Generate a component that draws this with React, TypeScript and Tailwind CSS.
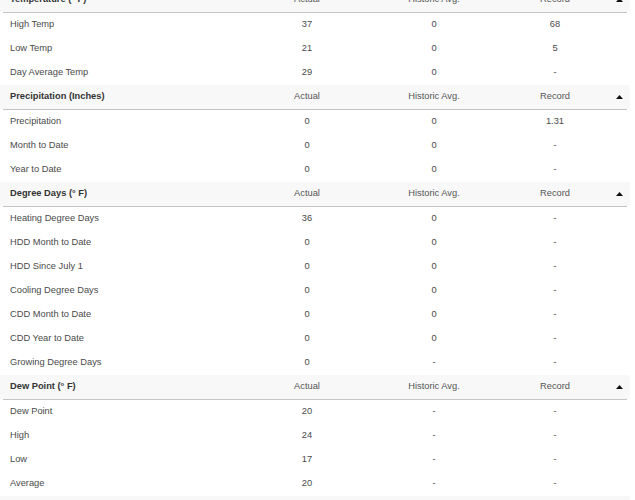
type Row = [string, string, string, string];

const sections: { title: string; rows: Row[] }[] = [
  {
    title: 'Temperature (° F)',
    rows: [
      ['High Temp', '37', '0', '68'],
      ['Low Temp', '21', '0', '5'],
      ['Day Average Temp', '29', '0', '-'],
    ],
  },
  {
    title: 'Precipitation (Inches)',
    rows: [
      ['Precipitation', '0', '0', '1.31'],
      ['Month to Date', '0', '0', '-'],
      ['Year to Date', '0', '0', '-'],
    ],
  },
  {
    title: 'Degree Days (° F)',
    rows: [
      ['Heating Degree Days', '36', '0', '-'],
      ['HDD Month to Date', '0', '0', '-'],
      ['HDD Since July 1', '0', '0', '-'],
      ['Cooling Degree Days', '0', '0', '-'],
      ['CDD Month to Date', '0', '0', '-'],
      ['CDD Year to Date', '0', '0', '-'],
      ['Growing Degree Days', '0', '-', '-'],
    ],
  },
  {
    title: 'Dew Point (° F)',
    rows: [
      ['Dew Point', '20', '-', '-'],
      ['High', '24', '-', '-'],
      ['Low', '17', '-', '-'],
      ['Average', '20', '-', '-'],
    ],
  },
  { title: 'Pressure', rows: [] },
];

const cols = 'grid grid-cols-[245px_124px_130px_112px_19px] items-center';

function Section({ title, rows }: { title: string; rows: Row[] }) {
  return (
    <div>
      <div className="bg-[#f8f8f8]">
        <div className={`${cols} h-6 text-[#555]`}>
          <div className="pl-[10px] font-semibold text-[#333]">{title}</div>
          <div className="text-center">Actual</div>
          <div className="text-center">Historic Avg.</div>
          <div className="text-center">Record</div>
          <div className="flex justify-center pr-[2px]">
            <svg width="7" height="4" viewBox="0 0 7 4">
              <path d="M0 4 L3.5 0 L7 4 Z" fill="#111" />
            </svg>
          </div>
        </div>
      </div>
      <div className="mx-[3px] h-px bg-[#c4c4c4]" />
      {rows.map((r) => (
        <div key={r[0]} className={`${cols} h-6 text-[#4a4a4a]`}>
          <div className="pl-[10px]">{r[0]}</div>
          <div className="text-center">{r[1]}</div>
          <div className="text-center">{r[2]}</div>
          <div className="text-center">{r[3]}</div>
          <div />
        </div>
      ))}
    </div>
  );
}

export default function App() {
  return (
    <div className="h-[500px] w-[635px] overflow-hidden bg-white font-['Liberation_Sans',Arial,sans-serif] text-[9.3px]">
      <div className="-mt-[12px] w-[630px]">
        {sections.map((s) => (
          <Section key={s.title} title={s.title} rows={s.rows} />
        ))}
      </div>
    </div>
  );
}
